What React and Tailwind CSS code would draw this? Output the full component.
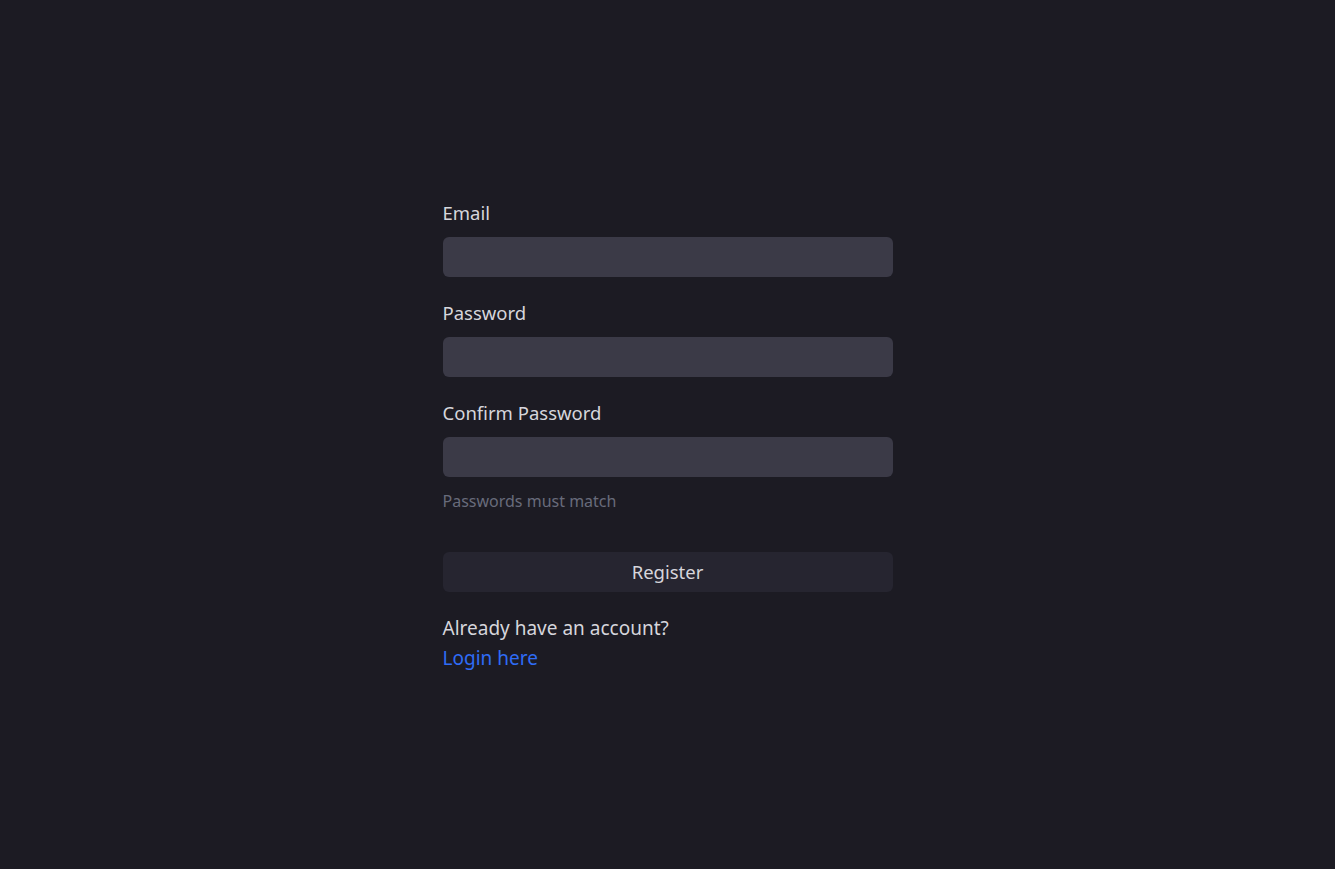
import { useState } from 'react';

function Field({ label, type = 'text', value, onChange }) {
  return (
    <label className="flex flex-col gap-3">
      <span className="text-[18.5px] leading-6 text-[#d6d6dc]">{label}</span>
      <input
        type={type}
        value={value}
        onChange={(event) => onChange(event.target.value)}
        className="h-10 rounded-md bg-[#3b3a47] px-3 text-[#e4e4e7] outline-none"
      />
    </label>
  );
}

export default function App() {
  const [form, setForm] = useState({ email: '', password: '', confirm: '' });

  function updateField(field, value) {
    setForm((current) => ({ ...current, [field]: value }));
  }

  return (
    <div className="flex min-h-screen items-center justify-center bg-[#1c1b23] pt-[5px] font-['Noto_Sans',sans-serif]">
      <form className="flex w-[450px] flex-col" onSubmit={(event) => event.preventDefault()}>
        <div className="flex flex-col gap-6">
          <Field label="Email" value={form.email} onChange={(v) => updateField('email', v)} />
          <Field label="Password" type="password" value={form.password} onChange={(v) => updateField('password', v)} />
          <Field label="Confirm Password" type="password" value={form.confirm} onChange={(v) => updateField('confirm', v)} />
        </div>
        <p className="mt-[14px] text-[16px] leading-5 text-[#686b7b]">Passwords must match</p>
        <button className="mt-[41px] h-10 rounded-md bg-[#262530] text-[18.5px] text-[#d6d6dc]">Register</button>
        <p className="mt-[21px] text-[19px] leading-[30px] text-[#d6d6dc]">Already have an account?</p>
        <a href="#" className="text-[19px] leading-[30px] text-[#2f6cf6]">Login here</a>
      </form>
    </div>
  );
}
